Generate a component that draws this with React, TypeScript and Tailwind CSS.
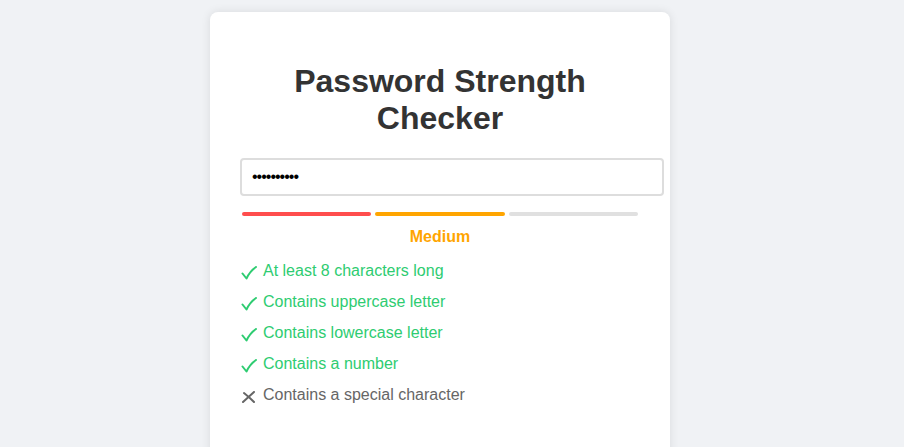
import React from 'react';

const rules = [
  { text: 'At least 8 characters long', ok: true },
  { text: 'Contains uppercase letter', ok: true },
  { text: 'Contains lowercase letter', ok: true },
  { text: 'Contains a number', ok: true },
  { text: 'Contains a special character', ok: false },
];

const Check = () => (
  <svg width="16" height="14" viewBox="0 0 16 14" className="shrink-0">
    <path d="M1.5 7.5 L5.5 12.5 Q9 5 15 1" fill="none" stroke="currentColor" strokeWidth="2" strokeLinecap="round" strokeLinejoin="round" />
  </svg>
);

const Cross = () => (
  <svg width="16" height="12" viewBox="0 0 16 12" className="shrink-0">
    <path d="M2 11 L13 1 M3 2 Q8 6 13 11" fill="none" stroke="currentColor" strokeWidth="2" strokeLinecap="round" />
  </svg>
);

export default function App() {
  return (
    <div className="min-h-screen bg-[#f0f2f5] flex justify-center pt-[12px] pr-[24px] font-['Liberation_Sans',Arial,sans-serif]">
      <div className="w-[460px] bg-white rounded-lg shadow-[0_0_10px_rgba(0,0,0,0.1)] p-[30px] h-[460px]">
        <h1 className="text-[32px] leading-[37px] font-bold text-[#333] text-center mt-[21px] mb-[21px]">
          Password Strength Checker
        </h1>
        <div className="w-[424px] h-[38px] border-2 border-[#ddd] rounded-[4px] px-[10px] flex items-center">
          <span className="text-[16px] text-black tracking-[-1px] leading-none">••••••••••</span>
        </div>
        <div className="flex gap-[4px] mt-[16px] px-[2px]">
          <div className="w-[129px] h-[4px] rounded-full bg-[#ff4d4d]" />
          <div className="w-[130px] h-[4px] rounded-full bg-[#ffa500]" />
          <div className="w-[129px] h-[4px] rounded-full bg-[#e0e0e0]" />
        </div>
        <div className="text-center font-bold text-[16px] text-[#ffa500] mt-[12px] leading-[18px]">Medium</div>
        <ul className="mt-[16px] flex flex-col gap-[13px]">
          {rules.map((r) => (
            <li key={r.text} className={`flex items-center text-[16px] leading-[18px] ${r.ok ? 'text-[#2ecc71]' : 'text-[#666]'}`}>
              <span className="w-[23px] pl-[1px] pt-[3px] flex items-center">{r.ok ? <Check /> : <Cross />}</span>
              <span>{r.text}</span>
            </li>
          ))}
        </ul>
      </div>
    </div>
  );
}
